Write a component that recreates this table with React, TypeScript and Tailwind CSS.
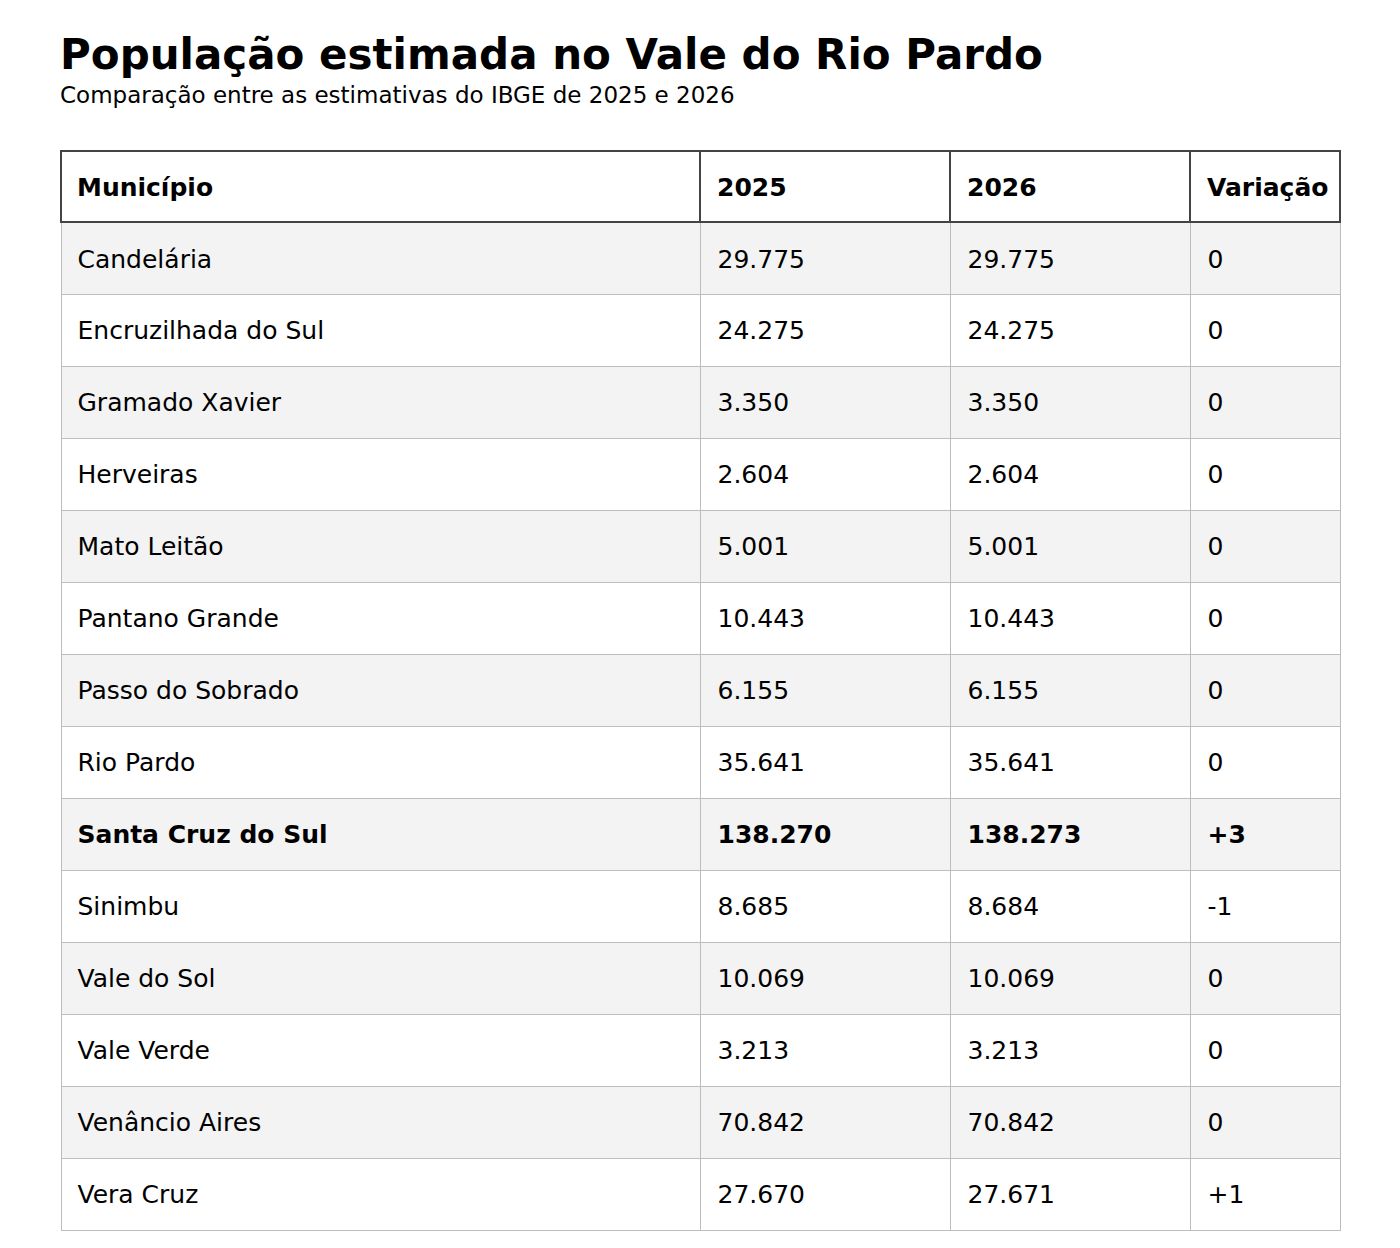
import React from "react";

const rows: [string, string, string, string, boolean?][] = [
  ["Candelária", "29.775", "29.775", "0"],
  ["Encruzilhada do Sul", "24.275", "24.275", "0"],
  ["Gramado Xavier", "3.350", "3.350", "0"],
  ["Herveiras", "2.604", "2.604", "0"],
  ["Mato Leitão", "5.001", "5.001", "0"],
  ["Pantano Grande", "10.443", "10.443", "0"],
  ["Passo do Sobrado", "6.155", "6.155", "0"],
  ["Rio Pardo", "35.641", "35.641", "0"],
  ["Santa Cruz do Sul", "138.270", "138.273", "+3", true],
  ["Sinimbu", "8.685", "8.684", "-1"],
  ["Vale do Sol", "10.069", "10.069", "0"],
  ["Vale Verde", "3.213", "3.213", "0"],
  ["Venâncio Aires", "70.842", "70.842", "0"],
  ["Vera Cruz", "27.670", "27.671", "+1"],
];

export default function App() {
  return (
    <div
      className="bg-white text-black px-[60px] pt-[30px] pb-[18px]"
      style={{ fontFamily: '"DejaVu Sans", sans-serif' }}
    >
      <h1 className="text-[42px] leading-[50px] font-bold">População estimada no Vale do Rio Pardo</h1>
      <p className="text-[23px] leading-[28px] mt-[1px]">Comparação entre as estimativas do IBGE de 2025 e 2026</p>
      <table className="mt-[41px] w-[1279px] border-collapse table-fixed text-[25px]">
        <colgroup>
          <col className="w-[639px]" />
          <col className="w-[250px]" />
          <col className="w-[240px]" />
          <col className="w-[150px]" />
        </colgroup>
        <thead>
          <tr className="h-[71px]">
            {["Município", "2025", "2026", "Variação"].map((h, j) => (
              <th
                key={h}
                className={`border-2 border-[#444] text-left font-bold ${j === 0 ? "pl-[15px]" : "pl-[16px]"} pr-[4px] pt-[2px] whitespace-nowrap`}
              >
                {h}
              </th>
            ))}
          </tr>
        </thead>
        <tbody>
          {rows.map((r, i) => (
            <tr key={r[0]} className={`h-[72px] ${i % 2 === 0 ? "bg-[#f3f3f3]" : "bg-white"} ${r[4] ? "font-bold" : ""}`}>
              {r.slice(0, 4).map((c, j) => (
                <td
                  key={j}
                  className={`border border-[#bdbdbd] ${j === 0 ? "pl-[16px]" : "pl-[17px]"} pr-[4px] pt-[2px]`}
                >
                  {c as string}
                </td>
              ))}
            </tr>
          ))}
        </tbody>
      </table>
    </div>
  );
}
